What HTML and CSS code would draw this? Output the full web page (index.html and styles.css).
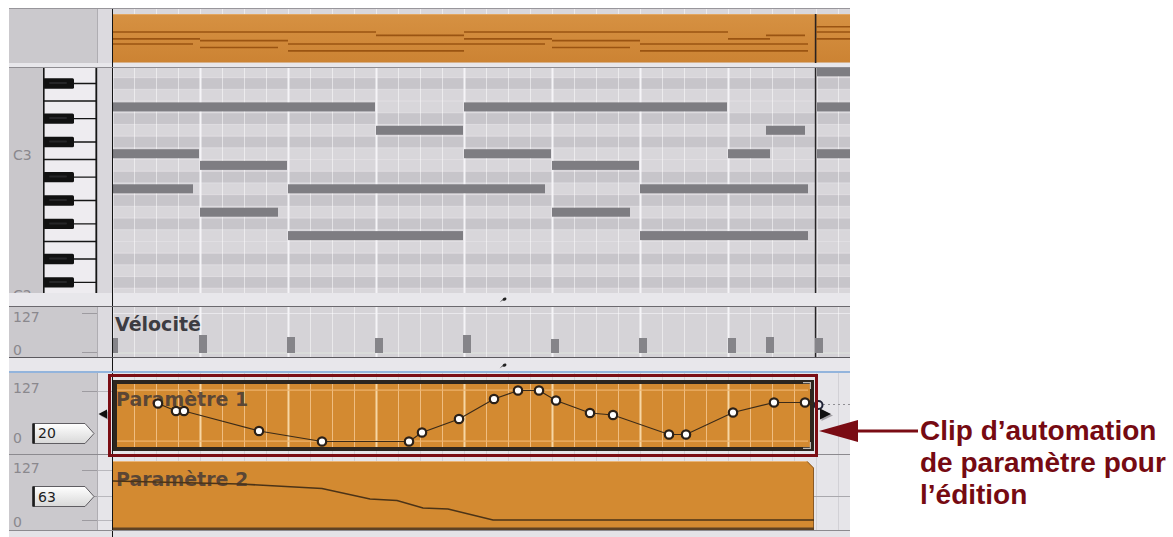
FILE: index.html
```html
<!DOCTYPE html>
<html lang="fr">
<head>
<meta charset="utf-8">
<title>Clip d’automation de paramètre</title>
<link rel="stylesheet" href="styles.css">
</head>
<body>
<svg class="defs" width="0" height="0" aria-hidden="true">
  <defs>
    <pattern id="gThin" x="112" y="0" width="22" height="10" patternUnits="userSpaceOnUse"><rect width="1" height="10" fill="#ffffff" fill-opacity="0.5"/></pattern>
    <pattern id="gBold" x="111.5" y="0" width="88" height="10" patternUnits="userSpaceOnUse"><rect width="2" height="10" fill="#f5f4f7"/></pattern>
    <pattern id="oThin" x="112" y="0" width="22" height="10" patternUnits="userSpaceOnUse"><rect width="1" height="10" fill="#efbd80"/></pattern>
    <pattern id="oBold" x="111.5" y="0" width="88" height="10" patternUnits="userSpaceOnUse"><rect width="2" height="10" fill="#f6d6a4"/></pattern>
    <pattern id="gGray" x="112" y="0" width="22" height="10" patternUnits="userSpaceOnUse"><rect width="1" height="10" fill="#d2d1d6"/></pattern>
    <linearGradient id="hdrOr" x1="0" y1="0" x2="0" y2="1"><stop offset="0" stop-color="#d69142"/><stop offset="1" stop-color="#cc8333"/></linearGradient>
    <linearGradient id="boxFill" x1="0" y1="0" x2="0" y2="1"><stop offset="0" stop-color="#ffffff"/><stop offset="1" stop-color="#d8d8d8"/></linearGradient>
  </defs>
</svg>

<div class="page">
  <div class="daw">

    <div class="lane lane-top">
      <div class="hdr"></div>
      <div class="gutter"></div>
      <div class="content">
        <svg width="737" height="54" viewBox="113 9 737 54">
          <rect x="113" y="9" width="737" height="54" fill="#e1dfe3"/>
          <rect x="113" y="9" width="737" height="5" fill="#d9d7db"/>
          <rect x="113" y="9" width="737" height="5" fill="url(#gThin)"/>
          <rect x="113" y="14" width="737" height="48.5" fill="url(#hdrOr)"/>
          <rect x="113" y="14" width="737" height="1" fill="#e3a65f"/>
          <rect x="814.8" y="14" width="1.6" height="49" fill="#2a2220"/>
          <path fill="none" stroke="#9a5412" stroke-width="1.6" d="M113 32H376M464 32H728M816 32H850M376 35.4H464M766 35.4H805M113 38.9H200M464 38.9H552M728 38.9H770M816 38.9H850M200 40.6H288M552 40.6H640M113 44H193M288 44H545M640 44H808M200 47.5H278M552 47.5H630M288 50.9H464M640 50.9H808M816 26.8H850"/>
        </svg>
      </div>
    </div>

    <div class="band gap"><div class="band-l"></div><div class="band-r"></div></div>

    <div class="lane lane-roll">
      <div class="hdr roll-hdr">
        <div class="keylabels"><span class="lbl">C3</span><span class="lbl c2">C2</span></div>
        <svg class="keys" width="54" height="225" viewBox="43 68 54 225">
          <rect x="43" y="68" width="54" height="225" fill="#eeecf0"/>
          <path fill="none" stroke="#161616" stroke-width="1.3" d="M43 101H97M43 159.5H97M43 241.5H97M74 83.5H97M74 118.6H97M74 142H97M74 177.1H97M74 200.5H97M74 223.9H97M74 259H97M74 282.4H97"/>
          <g fill="#111111">
            <rect x="43" y="78.3" width="31" height="10.4" rx="1.5"/>
            <rect x="43" y="113.4" width="31" height="10.4" rx="1.5"/>
            <rect x="43" y="136.8" width="31" height="10.4" rx="1.5"/>
            <rect x="43" y="171.9" width="31" height="10.4" rx="1.5"/>
            <rect x="43" y="195.3" width="31" height="10.4" rx="1.5"/>
            <rect x="43" y="218.7" width="31" height="10.4" rx="1.5"/>
            <rect x="43" y="253.8" width="31" height="10.4" rx="1.5"/>
            <rect x="43" y="277.2" width="31" height="10.4" rx="1.5"/>
          </g>
          <g fill="#262628">
            <rect x="49" y="82" width="18" height="2" rx="1"/>
            <rect x="49" y="117.1" width="18" height="2" rx="1"/>
            <rect x="49" y="140.5" width="18" height="2" rx="1"/>
            <rect x="49" y="175.6" width="18" height="2" rx="1"/>
            <rect x="49" y="199" width="18" height="2" rx="1"/>
            <rect x="49" y="222.4" width="18" height="2" rx="1"/>
            <rect x="49" y="257.5" width="18" height="2" rx="1"/>
            <rect x="49" y="280.9" width="18" height="2" rx="1"/>
          </g>
          <path fill="none" stroke="#151515" stroke-width="1.6" d="M43.8 68V293M96.2 68V293"/>
        </svg>
      </div>
      <div class="gutter roll-gutter"></div>
      <div class="content">
        <svg width="737" height="225" viewBox="113 68 737 225">
          <rect x="113" y="68" width="737" height="225" fill="#d8d6da"/>
          <g fill="#c7c5ca">
            <rect x="113" y="77.65" width="737" height="11.7"/>
            <rect x="113" y="112.75" width="737" height="11.7"/>
            <rect x="113" y="136.15" width="737" height="11.7"/>
            <rect x="113" y="171.25" width="737" height="11.7"/>
            <rect x="113" y="194.65" width="737" height="11.7"/>
            <rect x="113" y="218.05" width="737" height="11.7"/>
            <rect x="113" y="253.15" width="737" height="11.7"/>
            <rect x="113" y="276.55" width="737" height="11.7"/>
          </g>
          <path fill="none" stroke="#e3e1e5" stroke-width="0.8" d="M113 77.65H850M113 89.35H850M113 101.05H850M113 112.75H850M113 124.45H850M113 136.15H850M113 147.85H850M113 159.55H850M113 171.25H850M113 182.95H850M113 194.65H850M113 206.35H850M113 218.05H850M113 229.75H850M113 241.45H850M113 253.15H850M113 264.85H850M113 276.55H850M113 288.25H850"/>
          <rect x="113" y="68" width="737" height="225" fill="url(#gThin)"/>
          <rect x="113" y="68" width="737" height="225" fill="url(#gBold)"/>
          <rect x="814.8" y="68" width="1.6" height="225" fill="#262426"/>
          <g fill="#7e7d82">
            <rect x="113" y="102.4" width="262" height="9"/>
            <rect x="464" y="102.4" width="263" height="9"/>
            <rect x="817" y="102.4" width="33" height="9"/>
            <rect x="376" y="125.8" width="87" height="9"/>
            <rect x="766" y="125.8" width="39" height="9"/>
            <rect x="113" y="149.2" width="86" height="9"/>
            <rect x="464" y="149.2" width="87" height="9"/>
            <rect x="728" y="149.2" width="42" height="9"/>
            <rect x="817" y="149.2" width="33" height="9"/>
            <rect x="200" y="160.9" width="87" height="9"/>
            <rect x="552" y="160.9" width="87" height="9"/>
            <rect x="113" y="184.3" width="80" height="9"/>
            <rect x="288" y="184.3" width="257" height="9"/>
            <rect x="640" y="184.3" width="168" height="9"/>
            <rect x="200" y="207.7" width="78" height="9"/>
            <rect x="552" y="207.7" width="78" height="9"/>
            <rect x="288" y="231.1" width="175" height="9"/>
            <rect x="640" y="231.1" width="168" height="9"/>
            <rect x="817" y="67.3" width="33" height="9"/>
          </g>
        </svg>
      </div>
    </div>

    <div class="band sep">
      <div class="band-l"></div>
      <div class="band-r"><svg class="handle" width="8" height="6" viewBox="0 0 8 6"><path d="M0.5 5.5L3.5 2.5C4 1 5.5 0 7 0.8C8 1.8 7.3 3.6 5.6 3.8C4.8 3.9 4.2 3.6 3.8 3.2Z" fill="#222"/></svg></div>
    </div>

    <div class="lane lane-vel">
      <div class="hdr vel-hdr"><span class="lbl">127</span><span class="lbl v0">0</span></div>
      <div class="gutter"></div>
      <div class="content">
        <svg width="737" height="50" viewBox="113 307 737 50">
          <rect x="113" y="307" width="737" height="50" fill="#d5d3d7"/>
          <rect x="113" y="313" width="737" height="1" fill="#e9e8ec"/>
          <rect x="113" y="352.5" width="737" height="1" fill="#dfe6de"/>
          <rect x="113" y="307" width="737" height="50" fill="url(#gThin)"/>
          <rect x="113" y="307" width="737" height="50" fill="url(#gBold)"/>
          <rect x="814.8" y="307" width="1.6" height="50" fill="#262426"/>
          <text class="trk vel" x="115" y="331">Vélocité</text>
          <g fill="#858489">
            <rect x="113" y="338" width="5" height="15"/>
            <rect x="199" y="335" width="8" height="18"/>
            <rect x="287" y="337" width="8" height="16"/>
            <rect x="375" y="338" width="8" height="15"/>
            <rect x="463" y="335" width="8" height="18"/>
            <rect x="551" y="339" width="8" height="14"/>
            <rect x="639" y="338" width="8" height="15"/>
            <rect x="728" y="338" width="8" height="15"/>
            <rect x="766" y="337" width="8" height="16"/>
            <rect x="815" y="338" width="8" height="15"/>
          </g>
        </svg>
      </div>
    </div>

    <div class="band sep sep-blue">
      <div class="band-l"></div>
      <div class="band-r"><svg class="handle handle-2" width="8" height="6" viewBox="0 0 8 6"><path d="M0.5 5.5L3.5 2.5C4 1 5.5 0 7 0.8C8 1.8 7.3 3.6 5.6 3.8C4.8 3.9 4.2 3.6 3.8 3.2Z" fill="#222"/></svg></div>
    </div>

    <div class="lane lane-p1">
      <div class="hdr p1-hdr">
        <span class="lbl">127</span>
        <div class="valrow">
          <span class="lbl zero">0</span>
          <svg class="vbox" width="63" height="21" viewBox="0 0 63 21">
            <path d="M1 0.5H53L62 10.5L53 20.5H1Z" fill="url(#boxFill)" stroke="#5f5d62"/>
            <path d="M1.6 0.5V20.5" stroke="#1c1c1c" stroke-width="2.6"/>
            <text class="vtxt" x="6" y="15">20</text>
          </svg>
        </div>
      </div>
      <div class="gutter p-gutter p1-gutter">
        <svg width="14" height="81" viewBox="98 373 14 81">
          <path d="M108.5 411L100 415.5L108.5 420Z" fill="#a3a1a6"/>
          <path d="M107 409.5L98.5 414L107 418.5Z" fill="#111"/>
        </svg>
      </div>
      <div class="content">
        <svg width="737" height="81" viewBox="113 373 737 81">
          <rect x="113" y="373" width="737" height="81" fill="#e6e5e9"/>
          <rect x="113" y="373" width="737" height="81" fill="url(#gGray)"/>
          <rect x="113" y="380" width="701" height="71" fill="#d38a31"/>
          <rect x="116" y="384" width="692" height="63" fill="url(#oThin)"/>
          <rect x="116" y="384" width="692" height="63" fill="url(#oBold)"/>
          <rect x="116" y="389.5" width="692" height="1.2" fill="#eeb46e"/>
          <rect x="116" y="440.5" width="692" height="1.2" fill="#eeb46e"/>
          <rect x="115" y="382" width="697" height="67" fill="none" stroke="#2d261f" stroke-width="4"/>
          <path d="M803 382.6H810.4V389M803 448.4H810.4V442" fill="none" stroke="#bdb8b2" stroke-width="1.2"/>
          <text class="trk par" x="116" y="406">Paramètre 1</text>
          <polyline fill="none" stroke="#3a2a18" stroke-width="1.2" points="158,403.5 176,411 184,411 259,431 322,441.5 409,441.5 422,432.5 459,419 494,399 518,390.5 539,390.5 556,400.5 590,413 613,415 669,434.5 686,434.5 733,412.5 774,402.5 805,402.5 818,405"/>
          <path d="M823 404.5H850" stroke="#8f8e93" stroke-width="1.2" stroke-dasharray="2 3"/>
          <g fill="#ffffff" stroke="#2a2018" stroke-width="2.2">
            <circle cx="158" cy="403.5" r="4.2"/>
            <circle cx="176" cy="411" r="4.2"/>
            <circle cx="184" cy="411" r="4.2"/>
            <circle cx="259" cy="431" r="4.2"/>
            <circle cx="322" cy="441.5" r="4.2"/>
            <circle cx="409" cy="441.5" r="4.2"/>
            <circle cx="422" cy="432.5" r="4.2"/>
            <circle cx="459" cy="419" r="4.2"/>
            <circle cx="494" cy="399" r="4.2"/>
            <circle cx="518" cy="390.5" r="4.2"/>
            <circle cx="539" cy="390.5" r="4.2"/>
            <circle cx="556" cy="400.5" r="4.2"/>
            <circle cx="590" cy="413" r="4.2"/>
            <circle cx="613" cy="415" r="4.2"/>
            <circle cx="669" cy="434.5" r="4.2"/>
            <circle cx="686" cy="434.5" r="4.2"/>
            <circle cx="733" cy="412.5" r="4.2"/>
            <circle cx="774" cy="402.5" r="4.2"/>
            <circle cx="805" cy="402.5" r="4.2"/>
          </g>
          <circle cx="818.5" cy="405" r="4" fill="#e8e8ee" stroke="#1f2235" stroke-width="2"/>
          <path d="M821.5 410L833 415.5L821.5 421Z" fill="#a3a1a6"/>
          <path d="M820 408.5L831 414L820 419.5Z" fill="#111"/>
        </svg>
      </div>
    </div>

    <div class="lane lane-p2">
      <div class="hdr p2-hdr">
        <span class="lbl">127</span>
        <svg class="vbox vbox-2" width="63" height="21" viewBox="0 0 63 21">
          <path d="M1 0.5H53L62 10.5L53 20.5H1Z" fill="url(#boxFill)" stroke="#5f5d62"/>
          <path d="M1.6 0.5V20.5" stroke="#1c1c1c" stroke-width="2.6"/>
          <text class="vtxt" x="6" y="15.5">63</text>
        </svg>
        <span class="lbl p2-zero">0</span>
      </div>
      <div class="gutter p-gutter p2-gutter"></div>
      <div class="content">
        <svg width="737" height="75" viewBox="113 455 737 75">
          <rect x="113" y="455" width="737" height="75" fill="#e6e5e9"/>
          <rect x="113" y="455" width="737" height="75" fill="url(#gGray)"/>
          <rect x="113" y="496" width="737" height="1" fill="#a9a8ad"/>
          <path d="M113 461H807L814 468V530H113Z" fill="#d38a31"/>
          <path d="M113 461.5H807" stroke="#eab577" stroke-width="1"/>
          <path d="M807.2 461.5L813.5 468V530" fill="none" stroke="#8a5a25" stroke-width="1"/>
          <rect x="113" y="527.5" width="701" height="2.5" fill="#5e4224"/>
          <text class="trk par" x="116" y="486">Paramètre 2</text>
          <polyline fill="none" stroke="#4b3317" stroke-width="1.6" points="113,481 240,484 322,488.5 370,499 397,500.5 423,508 448,509 493,520 814,520"/>
        </svg>
      </div>
    </div>

    <div class="band tail"><div class="band-l"></div><div class="band-r"></div></div>
  </div>

  <div class="callout">Clip d’automation<br>de paramètre pour<br>l’édition</div>

  <div class="frame"></div>
  <svg class="arrow" width="104" height="28" viewBox="0 0 104 28">
    <path d="M3 13L42 2V24Z" fill="#7a0c14"/>
    <rect x="41" y="11.5" width="61" height="3" fill="#7a0c14"/>
  </svg>
</div>
</body>
</html>
```

FILE: styles.css
```css
* { box-sizing: border-box; }

html, body {
  margin: 0;
  padding: 0;
  background: #ffffff;
  overflow: hidden;
}

.defs {
  position: absolute;
  width: 0;
  height: 0;
  overflow: hidden;
}

.page {
  position: relative;
  display: flex;
  align-items: flex-start;
  width: 1173px;
  height: 537px;
  padding: 8px 0 0 9px;
}

.daw {
  flex: none;
  width: 841px;
  border-top: 1px solid #98969b;
  background: #e4e3e7;
}

.lane { display: flex; }

.hdr {
  flex: none;
  width: 88px;
  background: #cbc9cd;
}

.gutter {
  flex: none;
  width: 15px;
  background: #dcdadf;
  border-left: 1px solid #afadb2;
}

.content {
  flex: none;
  width: 738px;
  border-left: 1px solid #141414;
  overflow: hidden;
}

.content svg,
.keys,
.handle,
.vbox,
.p1-gutter svg { display: block; }

.band {
  display: flex;
  background: #e8e7eb;
}
.band-l { flex: none; width: 103px; }
.band-r { flex: 1; border-left: 1px solid #141414; }

.gap { height: 5px; border-bottom: 1px solid #8f8d92; }
.sep { height: 14px; border-bottom: 1px solid #6b696e; }
.sep-blue { height: 15px; border-bottom: 2px solid #93b4dc; }
.tail { height: 6px; background: #e4e3e7; }

.handle { margin: 4px 0 0 386px; }
.handle-2 { margin-top: 5px; }

.lane-top { height: 54px; }
.lane-roll { height: 225px; }
.lane-vel { height: 51px; border-bottom: 1px solid #5b595e; }
.lane-p1 { height: 82px; border-bottom: 1px solid #8c8a8f; }
.lane-p2 { height: 76px; border-bottom: 1px solid #8c8a8f; }

.roll-hdr { display: flex; }
.roll-gutter { background: #d9d7dc; }

.keylabels {
  flex: none;
  width: 34px;
  padding: 79px 0 0 4px;
  overflow: hidden;
  background: #c9c7cb;
}

.lbl {
  display: block;
  font-family: "DejaVu Sans", sans-serif;
  font-size: 14px;
  line-height: 16px;
  color: #8a888d;
}
.c2 { margin-top: 124px; }

.vel-hdr {
  padding: 2px 0 0 4px;
  background:
    linear-gradient(#9d9ba0, #9d9ba0) no-repeat 73px 6px / 15px 1px,
    linear-gradient(#9d9ba0, #9d9ba0) no-repeat 73px 45px / 15px 1px,
    #cbc9cd;
}
.v0 { margin-top: 17px; }

.p1-hdr {
  padding: 7px 0 0 4px;
  background:
    linear-gradient(#9d9ba0, #9d9ba0) no-repeat 73px 18px / 15px 1px,
    #cbc9cd;
}
.valrow {
  display: flex;
  align-items: flex-start;
  margin-top: 27px;
}
.zero { width: 19px; margin-top: 7px; }

.p2-hdr {
  padding: 5px 0 0 4px;
  background:
    linear-gradient(#9d9ba0, #9d9ba0) no-repeat 73px 15px / 15px 1px,
    linear-gradient(#9d9ba0, #9d9ba0) no-repeat 73px 41px / 15px 1px,
    linear-gradient(#9d9ba0, #9d9ba0) no-repeat 73px 65px / 15px 1px,
    #cbc9cd;
}
.vbox-2 { margin: 10px 0 0 19px; }
.p2-zero { margin-top: 7px; }

.p-gutter { background: #e6e5e9; }
.p1-gutter {
  background:
    linear-gradient(#b9b8bd, #b9b8bd) no-repeat 0 18px / 100% 1px,
    #e6e5e9;
}
.p2-gutter {
  background:
    linear-gradient(#b9b8bd, #b9b8bd) no-repeat 0 15px / 100% 1px,
    linear-gradient(#b9b8bd, #b9b8bd) no-repeat 0 41px / 100% 1px,
    linear-gradient(#b9b8bd, #b9b8bd) no-repeat 0 65px / 100% 1px,
    #e6e5e9;
}

.vtxt {
  font-family: "DejaVu Sans", sans-serif;
  font-size: 14px;
  fill: #1d1d1d;
}

.trk {
  font-family: "DejaVu Sans", sans-serif;
  font-weight: bold;
  font-size: 19px;
}
.vel { fill: #3d3c42; }
.par { fill: #4a3d36; fill-opacity: 0.88; }

.callout {
  flex: none;
  margin: 407px 0 0 70px;
  font-family: "Liberation Sans", Arial, sans-serif;
  font-weight: bold;
  font-size: 28px;
  line-height: 32px;
  color: #760a12;
  white-space: nowrap;
}

.frame {
  position: absolute;
  left: 108px;
  top: 374px;
  width: 710px;
  height: 83px;
  border: 3px solid #7b0d14;
  pointer-events: none;
}

.arrow {
  position: absolute;
  left: 816px;
  top: 418px;
}
```
